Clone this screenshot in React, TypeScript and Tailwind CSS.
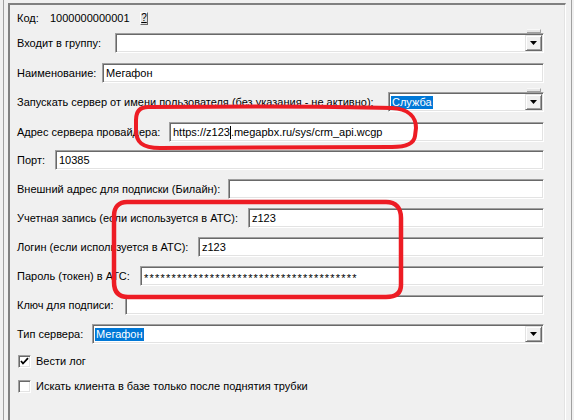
import React from "react";

const font = { fontFamily: '"Liberation Sans", Arial, sans-serif' };

const inputBox =
  "h-[20px] flex-1 flex items-center bg-white border border-t-[#a0a0a0] border-l-[#a0a0a0] border-b-white border-r-white shadow-[inset_1px_1px_0_#696969,inset_-1px_-1px_0_#e3e3e3] pl-[3px] text-[11px] text-black whitespace-nowrap overflow-hidden";

function Field({ label, labelW, value, className = "" }: { label: string; labelW: string; value?: React.ReactNode; className?: string }) {
  return (
    <div className={"flex items-center h-[20px] " + className}>
      <div className={"shrink-0 whitespace-nowrap " + labelW}>{label}</div>
      <div className={inputBox}>{value}</div>
    </div>
  );
}

function DropButton() {
  return (
    <div className="w-[17px] shrink-0 flex items-center justify-center bg-[#f0f0f0] border border-t-[#e3e3e3] border-l-[#e3e3e3] border-b-[#696969] border-r-[#696969] shadow-[inset_1px_1px_0_#ffffff,inset_-1px_-1px_0_#a0a0a0]">
      <svg width="7" height="4" viewBox="0 0 7 4">
        <path d="M0 0H7L3.5 4Z" fill="#000" />
      </svg>
    </div>
  );
}

function Combo({ label, labelW, value, strip, className = "" }: { label: string; labelW: string; value?: React.ReactNode; strip?: boolean; className?: string }) {
  return (
    <div className={"flex items-center h-[20px] " + className}>
      <div className={"shrink-0 whitespace-nowrap " + labelW}>{label}</div>
      <div className="relative h-[20px] flex-1 flex items-stretch bg-white border border-t-[#a0a0a0] border-l-[#a0a0a0] border-b-white border-r-white shadow-[inset_1px_1px_0_#696969,inset_-1px_-1px_0_#e3e3e3] p-[1px]">
        <div className="flex-1 flex items-center pl-[1px] text-[11px] whitespace-nowrap overflow-hidden">{value}</div>
        <DropButton />
        {strip && (
          <div className="absolute -top-[5px] right-[2px] w-[14px] h-[4px] bg-[#e6e6e6] border-t border-[#f8f8f8] border-b border-b-[#a0a0a0] border-r border-r-[#a0a0a0]" />
        )}
      </div>
    </div>
  );
}

function Selected({ children }: { children: React.ReactNode }) {
  return <span className="bg-[#0078d7] text-white leading-[13px] px-px">{children}</span>;
}

function Check({ checked }: { checked?: boolean }) {
  return (
    <div className="w-[13px] h-[13px] shrink-0 bg-white border border-t-[#a0a0a0] border-l-[#a0a0a0] border-b-white border-r-white shadow-[inset_1px_1px_0_#696969,inset_-1px_-1px_0_#e3e3e3] flex items-center justify-center">
      {checked && (
        <svg width="9" height="9" viewBox="0 0 9 9">
          <path d="M1 4 L3 6.5 L8 1.2" stroke="#000" strokeWidth="1.8" fill="none" />
        </svg>
      )}
    </div>
  );
}

export default function App() {
  return (
    <div className="relative w-[574px] h-[420px] overflow-hidden bg-[#f0f0f0] text-[11px] text-black flex" style={font}>
      <div className="w-[3px] shrink-0" />
      <div className="w-px shrink-0 bg-[#a0a0a0]" />
      <div className="w-[4px] shrink-0" />

      {/* form panel */}
      <div className="flex-1 mt-[3px] border-t-2 border-l-2 border-r border-t-[#808080] border-l-[#808080] border-r-white shadow-[inset_-1px_0_0_#e3e3e3] pl-[7px] pr-[21px] pt-[3px] flex flex-col">
        <div className="flex items-center h-[20px]">
          <span className="w-[33px]">Код:</span>
          <span className="w-[90px]">1000000000001</span>
          <div className="w-[8px] h-[13px] flex items-center justify-center bg-[#e1e1e1] border border-t-white border-l-white border-b-[#696969] border-r-[#696969] text-[10px] leading-none underline">?</div>
        </div>

        <Combo className="mt-[5px]" label="Входит в группу:" labelW="w-[98px]" strip />
        <Field className="mt-[10px]" label="Наименование:" labelW="w-[85px]" value="Мегафон" />
        <Combo className="mt-[9px]" label="Запускать сервер от имени пользователя (без указания - не активно):" labelW="w-[371px]" value={<Selected>Служба</Selected>} strip />
        <Field
          className="mt-[10px]"
          label="Адрес сервера провайдера:"
          labelW="w-[152px]"
          value={
            <>
              https://z123<span className="inline-block w-px h-[13px] bg-black" />.megapbx.ru/sys/crm_api.wcgp
            </>
          }
        />
        <Field className="mt-[8px]" label="Порт:" labelW="w-[38px]" value="10385" />
        <Field className="mt-[9px]" label="Внешний адрес для подписки (Билайн):" labelW="w-[211px]" />
        <Field className="mt-[9px]" label="Учетная запись (если используется в АТС):" labelW="w-[231px]" value="z123" />
        <Field className="mt-[9px]" label="Логин (если используется в АТС):" labelW="w-[181px]" value="z123" />
        <Field
          className="mt-[9px]"
          label="Пароль (токен) в АТС:"
          labelW="w-[123px]"
          value={<span className="tracking-[1.2px] translate-y-[2px]">***************************************</span>}
        />
        <Field className="mt-[9px]" label="Ключ для подписи:" labelW="w-[108px]" />
        <Combo className="mt-[9px]" label="Тип сервера:" labelW="w-[75px]" value={<Selected>Мегафон</Selected>} />

        <div className="flex items-center gap-[5px] h-[13px] mt-[11px] pl-px">
          <Check checked />
          <span>Вести лог</span>
        </div>
        <div className="flex items-center gap-[5px] h-[13px] mt-[12px] pl-px">
          <Check />
          <span>Искать клиента в базе только после поднятия трубки</span>
        </div>
      </div>

      <div className="w-[5px] shrink-0" />
      <div className="w-px shrink-0 bg-[#a0a0a0]" />
      <div className="w-[2px] shrink-0" />

      {/* red hand-drawn annotations */}
      <svg className="absolute inset-0 pointer-events-none" width="574" height="420" viewBox="0 0 574 420">
        <path
          d="M148 107 C250 106 330 106 392 108 C410 109 416 118 416 128 L415 136 C414 144 405 147 392 147 L160 148 C142 148 136 142 136 130 L136 120 C136 111 140 107 148 107 Z"
          stroke="#ed1c24"
          strokeWidth="4"
          fill="none"
        />
        <path
          d="M127 202 L386 202 C396 202 401 208 401 218 L401 285 C401 293 396 297 386 297 L128 297 C118 297 114 291 114 282 L114 216 C114 207 119 202 127 202 Z"
          stroke="#ed1c24"
          strokeWidth="4.5"
          fill="none"
        />
      </svg>
    </div>
  );
}
